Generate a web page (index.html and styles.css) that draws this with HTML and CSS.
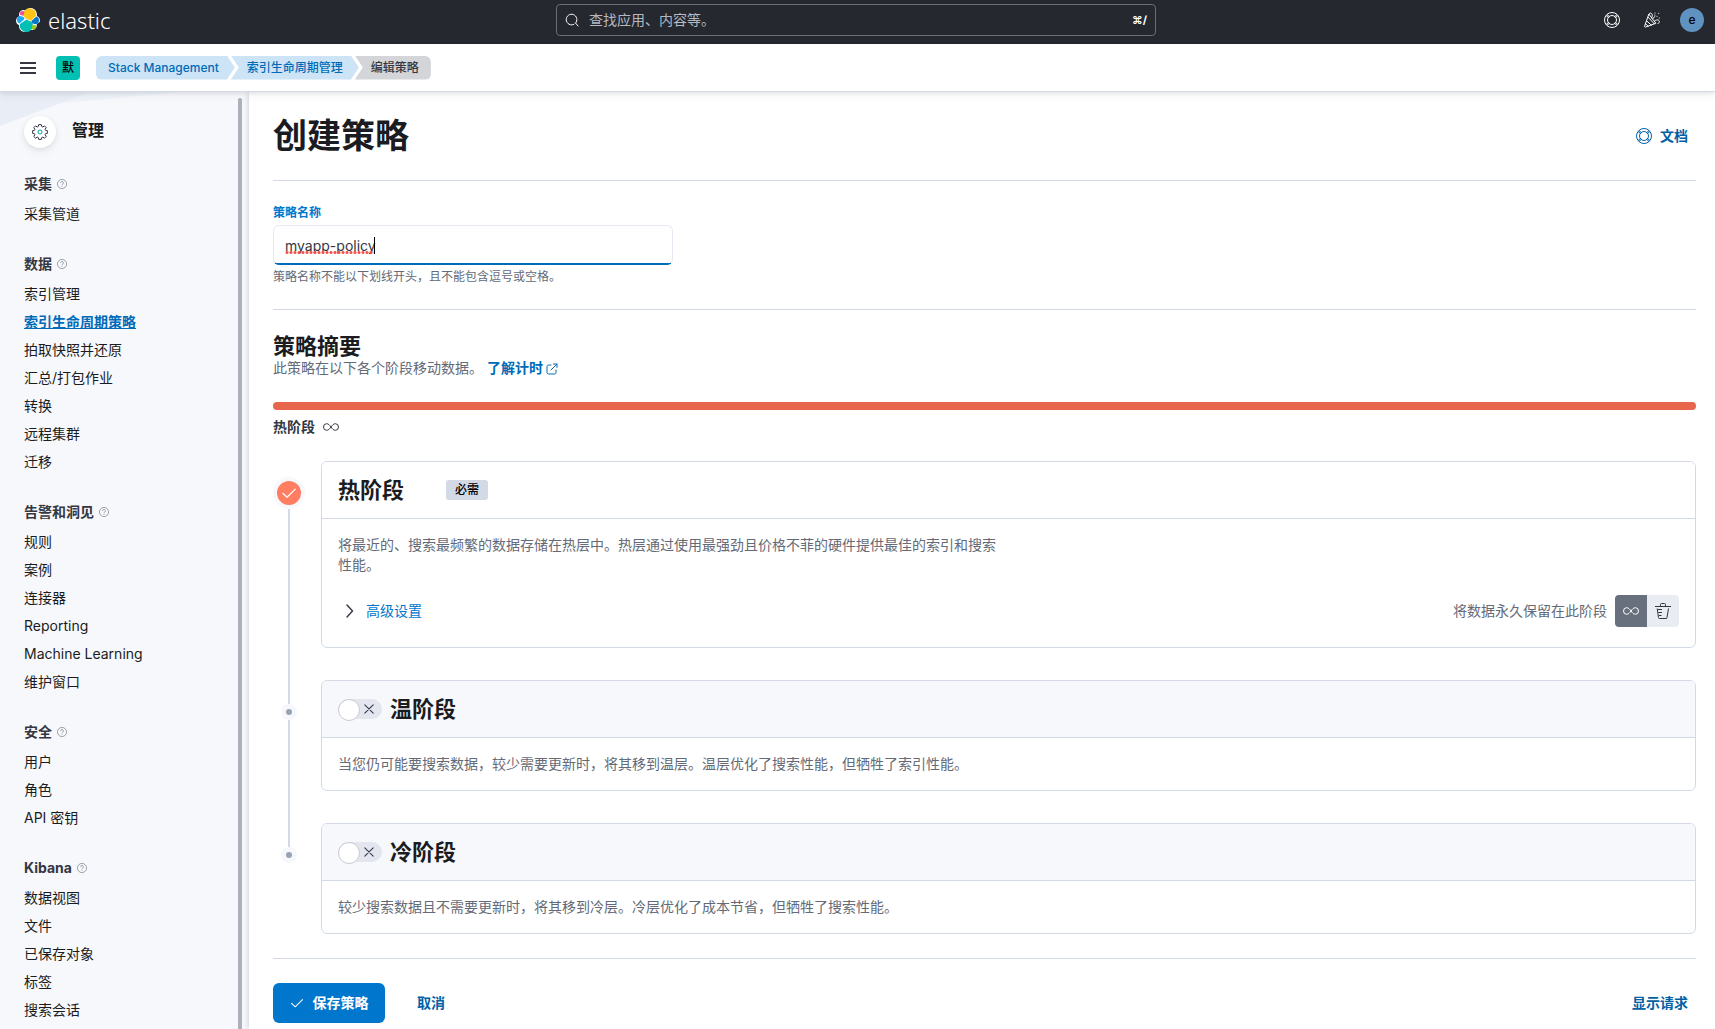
FILE: index.html
```html
<!DOCTYPE html>
<html lang="zh-CN">
<head>
<meta charset="utf-8">
<meta name="viewport" content="width=device-width, initial-scale=1">
<title>创建策略 - Elastic</title>
<link rel="stylesheet" href="styles.css">
</head>
<body>
<svg class="sprite" aria-hidden="true">
  <symbol id="i-help" viewBox="0 0 16 16">
    <g fill="none" stroke="currentColor"><circle cx="8" cy="8" r="7.5"/><circle cx="8" cy="8" r="4.5"/>
    <path d="M3 2.6l2.6 2.2M2.2 3.7l2.5 2M13 2.6l-2.6 2.2M13.8 3.7l-2.5 2M3 13.4l2.6-2.2M2.2 12.3l2.5-2M13 13.4l-2.6-2.2M13.8 12.3l-2.5-2"/></g>
  </symbol>
  <symbol id="i-question" viewBox="0 0 16 16">
    <g fill="none" stroke="currentColor"><circle cx="8" cy="8" r="7.3"/><path d="M5.8 6.2a2.2 2.2 0 1 1 3.3 1.9c-.8.4-1.1.8-1.1 1.7M8 11v1.3"/></g>
  </symbol>
  <symbol id="i-check" viewBox="0 0 16 16"><path fill="none" stroke="currentColor" stroke-width="1.2" stroke-linecap="round" stroke-linejoin="round" d="M1.8 8.3l4.2 4 8.3-8.2"/></symbol>
  <symbol id="i-cross" viewBox="0 0 16 16"><path fill="none" stroke="currentColor" stroke-width="1.2" stroke-linecap="round" d="M3.2 3.2l9.6 9.6M12.8 3.2l-9.6 9.6"/></symbol>
  <symbol id="i-infinity" viewBox="0 0 16 16"><path fill="none" stroke="currentColor" stroke-width="1" d="M8 8C6.500 6 5.300 4.700 3.700 4.700a3.200 3.300 0 0 0 0 6.600C5.300 11.300 6.500 10 8 8s2.700-3.300 4.300-3.300a3.200 3.300 0 0 1 0 6.600C10.700 11.300 9.500 10 8 8z"/></symbol>
</svg>

<header class="topbar">
  <a class="brand" href="#" aria-label="Elastic">
    <svg width="24" height="24" viewBox="0 0 32 32" aria-hidden="true">
      <path fill="#fff" d="M32 16.770c0-2.680-1.660-5.030-4.170-5.950C28.300 7.260 27.300 1 19.720.100 16.800-.050 14.300 1.200 12.600 3.400 9.600 1.300 5.200 3 4.200 7.300c-.3 1.100-.2 2.600.1 3.600C1.600 11.800 0 14.400 0 17c0 2.700 1.700 5.100 4.200 6-.9 5 3 9 7.500 9 3 0 5.700-1.600 7.500-3.500 3.500 2.500 9.300-.400 8.500-7.300 2.600-1 4.300-1.800 4.300-4.430z"/>
      <path fill="#FEC514" d="M12.580 13.790l7 3.190 7.060-6.180c.1-.500.150-1 .150-1.560A8.750 8.750 0 0 0 10.820 4.300l-1.180 6.090z"/>
      <path fill="#00BFB3" d="M5.330 21.220a8.780 8.780 0 0 0 16.010 6.520l1.160-6.070-1.560-2.980-7.030-3.200z"/>
      <path fill="#F04E98" d="M5.290 9.090l4.800 1.140 1.050-5.460A3.790 3.790 0 0 0 5.290 9.090z"/>
      <path fill="#1BA9F5" d="M4.870 10.240a5.610 5.610 0 0 0-.210 10.450L11.390 14.600l-1.230-2.640z"/>
      <path fill="#93C90E" d="M20.880 27.740a3.780 3.780 0 0 0 5.840-4.300l-4.800-1.120z"/>
      <path fill="#07C" d="M21.850 20.560l5.280 1.240a5.610 5.610 0 0 0 .21-10.450l-6.910 6.050z"/>
    </svg>
    <span class="brand-name">elastic</span>
  </a>
  <form class="search" role="search">
    <svg width="14" height="14" viewBox="0 0 14 14" aria-hidden="true"><path fill="none" stroke="currentColor" d="M10.300 10.300a5.300 5.300 0 1 0-1.200.900M10.300 9.800l3 3.500"/></svg>
    <input type="search" aria-label="查找应用、内容等。" placeholder="查找应用、内容等。">
    <kbd>⌘/</kbd>
  </form>
  <div class="top-actions">
    <button type="button" aria-label="帮助"><svg width="16" height="16"><use href="#i-help"/></svg></button>
    <button type="button" aria-label="新增功能">
      <svg width="16" height="16" viewBox="0 0 16 16" fill="none" stroke="currentColor" stroke-linecap="round" stroke-linejoin="round"><path d="M4.700 2.500L.6 14.100c-.200.700.300 1.200 1 1l9.900-3.700zM4.100 5.200l6.300 6.700M2.700 9l4.800 4.300M1.700 11.800l2.400 2.500M4.700 2.500C5 .500 8 .400 8.300 3.200c.1 1.300-.5 1.600-.6 2.800M11 8.500c1.200.100 1.500-.800 2.700-.600 2.100.3 2.400 3.200.3 3.600M8.600 6.700l2.400-2.200M11 1v.1M13 4.300v.1M14.700 1.300v.1M15.300 6v.1M10.800 3v.1"/></svg>
    </button>
    <button type="button" aria-label="用户菜单"><span class="user">e</span></button>
  </div>
</header>

<div class="navbar">
  <button class="menu" type="button" aria-label="切换主导航"><svg width="16" height="12" viewBox="0 0 16 12"><path fill="currentColor" d="M0 0h16v2H0zM0 5h16v2H0zM0 10h16v2H0z"/></svg></button>
  <button class="space" type="button" aria-label="默认工作区">默</button>
  <nav aria-label="面包屑">
    <ol class="crumbs">
      <li><a href="#">Stack Management</a></li>
      <li><a href="#">索引生命周期管理</a></li>
      <li aria-current="page">编辑策略</li>
    </ol>
  </nav>
</div>

<div class="layout">
  <aside class="sidebar">
    <svg class="backdrop" width="240" height="40" viewBox="0 0 240 40" aria-hidden="true"><path fill="#EEF2F9" d="M0 0h180L0 17z"/><path fill="#E9EEF6" d="M0 0h90L0 34z"/></svg>
    <nav class="side-nav" aria-label="管理">
      <div class="side-head">
        <span class="gear"><svg width="16" height="16" viewBox="0 0 16 16" fill="none"><path stroke="#343741" stroke-linejoin="round" d="M6.700.600h2.600l.4 1.900 1.100.500 1.700-1.100 1.700 1.700-1.100 1.700.5 1.100 1.800.300v2.600l-1.800.4-.5 1.100 1.100 1.700-1.700 1.700-1.700-1.100-1.100.500-.4 1.800H6.700l-.4-1.800-1.100-.5-1.700 1.100-1.700-1.700 1.100-1.700-.5-1.100L.600 9.300V6.700l1.800-.3.500-1.100-1.100-1.700 1.700-1.700L5.200 3l1.100-.5z"/><circle cx="8" cy="8" r="2" stroke="#00A599"/></svg></span>
        <h2>管理</h2>
      </div>
      <section>
        <h3>采集 <svg width="10" height="10"><use href="#i-question"/></svg></h3>
        <ul><li><a href="#">采集管道</a></li></ul>
      </section>
      <section>
        <h3>数据 <svg width="10" height="10"><use href="#i-question"/></svg></h3>
        <ul>
          <li><a href="#">索引管理</a></li>
          <li><a href="#" class="selected" aria-current="page">索引生命周期策略</a></li>
          <li><a href="#">拍取快照并还原</a></li>
          <li><a href="#">汇总/打包作业</a></li>
          <li><a href="#">转换</a></li>
          <li><a href="#">远程集群</a></li>
          <li><a href="#">迁移</a></li>
        </ul>
      </section>
      <section>
        <h3>告警和洞见 <svg width="10" height="10"><use href="#i-question"/></svg></h3>
        <ul>
          <li><a href="#">规则</a></li>
          <li><a href="#">案例</a></li>
          <li><a href="#">连接器</a></li>
          <li><a href="#">Reporting</a></li>
          <li><a href="#">Machine Learning</a></li>
          <li><a href="#">维护窗口</a></li>
        </ul>
      </section>
      <section>
        <h3>安全 <svg width="10" height="10"><use href="#i-question"/></svg></h3>
        <ul>
          <li><a href="#">用户</a></li>
          <li><a href="#">角色</a></li>
          <li><a href="#">API 密钥</a></li>
        </ul>
      </section>
      <section>
        <h3>Kibana <svg width="10" height="10"><use href="#i-question"/></svg></h3>
        <ul>
          <li><a href="#">数据视图</a></li>
          <li><a href="#">文件</a></li>
          <li><a href="#">已保存对象</a></li>
          <li><a href="#">标签</a></li>
          <li><a href="#">搜索会话</a></li>
        </ul>
      </section>
    </nav>
    <div class="scroll-thumb"></div>
  </aside>

  <main class="content">
    <div class="page-head">
      <h1>创建策略</h1>
      <a class="text-btn" href="#"><svg width="16" height="16" aria-hidden="true"><use href="#i-help"/></svg>文档</a>
    </div>

    <div class="name-field">
      <label for="policy-name">策略名称</label>
      <div class="input-wrap">
        <input id="policy-name" type="text" value="myapp-policy" spellcheck="false" aria-describedby="policy-help">
        <span class="marked" aria-hidden="true"></span>
      </div>
      <p id="policy-help">策略名称不能以下划线开头，且不能包含逗号或空格。</p>
    </div>

    <section class="summary">
      <h2>策略摘要</h2>
      <p>此策略在以下各个阶段移动数据。 <a href="#">了解计时 <svg width="12" height="12" viewBox="0 0 12 12" fill="none" stroke="currentColor" stroke-linecap="round" aria-hidden="true"><path d="M5 2H2.500A1.500 1.500 0 0 0 1 3.500v6A1.500 1.500 0 0 0 2.500 11h6A1.500 1.500 0 0 0 10 9.500V7M7.500 1H11v3.500M11 1L5 7"/></svg></a></p>
      <div class="bar"></div>
      <div class="bar-label">热阶段 <svg width="16" height="16" aria-hidden="true"><use href="#i-infinity"/></svg></div>
    </section>

    <div class="phases">
      <section class="phase">
        <div class="track"><span class="gap"></span><span class="done"><svg width="16" height="16" aria-hidden="true"><use href="#i-check"/></svg></span><span class="line"></span></div>
        <div class="card">
          <div class="card-head open"><h2>热阶段</h2><span class="badge">必需</span></div>
          <div class="card-body">
            <p>将最近的、搜索最频繁的数据存储在热层中。热层通过使用最强劲且价格不菲的硬件提供最佳的索引和搜索性能。</p>
            <div class="card-tools">
              <button class="advanced" type="button" aria-expanded="false"><svg width="16" height="16" viewBox="0 0 16 16" aria-hidden="true"><path fill="none" stroke="#343741" stroke-width="1.400" stroke-linecap="round" d="M5 2l5.500 6L5 14"/></svg>高级设置</button>
              <div class="retention">
                <span>将数据永久保留在此阶段</span>
                <div class="toggle">
                  <button class="on" type="button" aria-pressed="true" aria-label="永久保留"><svg width="16" height="16"><use href="#i-infinity"/></svg></button>
                  <button type="button" aria-pressed="false" aria-label="删除数据"><svg width="16" height="16" viewBox="0 0 16 16" fill="none" stroke="currentColor"><path d="M0 3.500h16M5.500 3.500v-2a1 1 0 0 1 1-1h3a1 1 0 0 1 1 1v2M2.200 5.500l1.300 9a1 1 0 0 0 1 1h6.500a1 1 0 0 0 1-1l1.500-9M2.500 6.500h4.500M3.300 9.500H7M3.600 12.500H6.500"/></svg></button>
                </div>
              </div>
            </div>
          </div>
        </div>
      </section>

      <section class="phase">
        <div class="track"><span class="line lead"></span><span class="dot"></span><span class="line"></span></div>
        <div class="card">
          <div class="card-head">
            <label class="switch"><input type="checkbox" role="switch" aria-label="启用温阶段"><svg width="14" height="14" aria-hidden="true"><use href="#i-cross"/></svg></label>
            <h2>温阶段</h2>
          </div>
          <div class="card-body"><p class="wide">当您仍可能要搜索数据，较少需要更新时，将其移到温层。温层优化了搜索性能，但牺牲了索引性能。</p></div>
        </div>
      </section>

      <section class="phase">
        <div class="track"><span class="line lead"></span><span class="dot"></span></div>
        <div class="card">
          <div class="card-head">
            <label class="switch"><input type="checkbox" role="switch" aria-label="启用冷阶段"><svg width="14" height="14" aria-hidden="true"><use href="#i-cross"/></svg></label>
            <h2>冷阶段</h2>
          </div>
          <div class="card-body"><p class="wide">较少搜索数据且不需要更新时，将其移到冷层。冷层优化了成本节省，但牺牲了搜索性能。</p></div>
        </div>
      </section>
    </div>

    <div class="actions">
      <button class="save" type="button"><svg width="14" height="14" aria-hidden="true"><use href="#i-check"/></svg>保存策略</button>
      <button class="text-btn" type="button">取消</button>
      <button class="text-btn request" type="button">显示请求</button>
    </div>
  </main>
</div>
</body>
</html>
```
FILE: styles.css
```css
:root {
  --ink: #343741;
  --title: #1a1c21;
  --subdued: #646a77;
  --link: #0061a6;
  --primary: #0077cc;
  --line: #d3dae6;
  --shade: #f7f8fc;
}

* { box-sizing: border-box; }

body {
  margin: 0;
  min-height: 100vh;
  display: flex;
  flex-direction: column;
  background: #fff;
  color: var(--ink);
  font: 400 14px/20px Inter, "Noto Sans CJK SC", sans-serif;
}

h1, h2, h3, p, ul, ol { margin: 0; padding: 0; }
ul, ol { list-style: none; }
a { color: inherit; text-decoration: none; }
svg { flex: none; }
.sprite { display: none; }

button {
  display: flex;
  align-items: center;
  justify-content: center;
  padding: 0;
  border: 0;
  background: none;
  color: inherit;
  font: inherit;
  cursor: pointer;
}

/* Top bar */
.topbar {
  display: grid;
  grid-template-columns: 1fr minmax(200px, 600px) 1fr;
  align-items: center;
  height: 44px;
  padding: 0 3px 4px 16px;
  background: #25282f;
  color: #fff;
}

.brand { display: flex; align-items: center; gap: 8px; }
.brand-name { font: 300 22px/24px "Noto Sans", "Open Sans", sans-serif; }

.search {
  display: flex;
  align-items: center;
  gap: 10px;
  height: 32px;
  margin-left: -8px;
  margin-right: 8px;
  padding: 0 8px;
  border: 1px solid #6a6d73;
  border-radius: 4px;
}

.search input {
  flex: 1;
  min-width: 0;
  padding: 0;
  border: 0;
  outline: 0;
  background: none;
  color: #fff;
  font: inherit;
}

.search input::placeholder { color: #b4b8c1; opacity: 1; }
.search kbd { font: 700 11px/16px Inter, "Noto Sans CJK SC", "DejaVu Sans", sans-serif; }

.top-actions { display: flex; justify-content: flex-end; }
.top-actions button { width: 40px; height: 40px; }

.user {
  width: 24px;
  border-radius: 50%;
  background: #6092c0;
  color: #000;
  font-size: 12px;
  font-weight: 500;
  line-height: 24px;
}

/* Second bar */
.navbar {
  position: relative;
  z-index: 2;
  display: flex;
  align-items: center;
  height: 48px;
  padding: 0 16px 0 20px;
  border-bottom: 1px solid var(--line);
  background: #fff;
  box-shadow: 0 1px 4px rgba(0, 0, 0, .08), 0 4px 8px rgba(0, 0, 0, .05);
}

.menu { margin-right: 20px; height: 24px; color: var(--ink); }

.space {
  width: 24px;
  height: 24px;
  margin-right: 16px;
  border-radius: 4px;
  background: #00bfb3;
  color: #000;
  font-size: 12px;
  font-weight: 500;
}

.crumbs { display: flex; font-size: 12px; font-weight: 500; line-height: 24px; }

.crumbs li {
  padding: 0 16px;
  background: #cce4f5;
  color: #006bb8;
  clip-path: polygon(0 0, calc(100% - 8px) 0, 100% 50%, calc(100% - 8px) 100%, 0 100%, 8px 50%);
}

.crumbs li + li { margin-left: -4px; }

.crumbs li:first-child {
  padding-left: 12px;
  border-radius: 6px 0 0 6px;
  clip-path: polygon(0 0, calc(100% - 8px) 0, 100% 50%, calc(100% - 8px) 100%, 0 100%);
}

.crumbs li:last-child {
  padding-right: 12px;
  border-radius: 0 6px 6px 0;
  background: #d4d5d8;
  color: var(--ink);
  clip-path: polygon(0 0, 100% 0, 100% 100%, 0 100%, 8px 50%);
}

/* Body */
.layout { flex: 1; display: flex; }

.sidebar {
  position: relative;
  display: flex;
  flex: none;
  width: 249px;
  background: var(--shade);
}

.backdrop { position: absolute; top: 0; left: 0; }
.side-nav { position: relative; flex: 1; padding: 24px 12px 4px 24px; }

.side-head { display: flex; align-items: center; gap: 16px; margin-bottom: 26px; }
.side-head h2 { font-size: 16px; font-weight: 700; line-height: 28px; align-self: flex-start; color: var(--title); }

.gear {
  display: flex;
  align-items: center;
  justify-content: center;
  width: 32px;
  height: 32px;
  border-radius: 50%;
  background: #fff;
  box-shadow: 0 1px 4px rgba(0, 0, 0, .08), 0 4px 10px rgba(0, 0, 0, .06);
}

.side-nav section + section { margin-top: 26px; }
.side-nav h3 { display: flex; align-items: center; gap: 5px; margin-bottom: 6px; font-size: 14px; font-weight: 700; line-height: 20px; }
.side-nav h3 svg { color: #69707d; }
.side-nav li { line-height: 28px; color: var(--title); }
.side-nav .selected { color: #006bb8; font-weight: 600; text-decoration: underline; }

.scroll-thumb { width: 4px; margin: 6px 7px 0 0; border-radius: 2px 2px 0 0; background: #abb0ba; }

.content {
  position: relative;
  flex: 1;
  min-width: 0;
  padding: 24px 19px 4px 24px;
  background: #fff;
  box-shadow: 0 0 6px rgba(0, 0, 0, .2);
}

.page-head {
  display: flex;
  align-items: center;
  justify-content: space-between;
  padding-bottom: 24px;
  border-bottom: 1px solid var(--line);
}

h1 { color: var(--title); font-size: 34px; font-weight: 700; line-height: 40px; }
h2 { color: var(--title); font-size: 22px; font-weight: 700; line-height: 24px; }

.text-btn { display: flex; align-items: center; gap: 8px; padding: 0 8px; color: var(--link); font-weight: 600; }

.name-field {
  padding: 24px 0;
  border-bottom: 1px solid var(--line);
  font-size: 12px;
  line-height: 16px;
}

.name-field label { display: block; margin-bottom: 4px; color: var(--primary); font-weight: 700; }
.name-field p { margin-top: 4px; color: var(--subdued); }

.input-wrap { position: relative; width: 400px; max-width: 100%; }

.input-wrap input {
  display: block;
  width: 100%;
  height: 40px;
  padding: 0 11px;
  border: 1px solid #e6e9f1;
  border-radius: 6px;
  outline: 0;
  background: linear-gradient(#006bb8, #006bb8) bottom / 100% 2px no-repeat border-box, #fff;
  border-bottom-color: #006bb8;
  color: var(--ink);
  font: inherit;
  font-size: 14px;
}

/* Spelling mark and text caret */
.marked {
  position: absolute;
  top: 12px;
  left: 12px;
  width: 90px;
  height: 17px;
  border-right: 1px solid #000;
  background: radial-gradient(circle, #f0544a 1px, transparent 2px) bottom left / 4px 3px repeat-x;
}

.summary { padding: 24px 0; }
.summary p { color: var(--subdued); }
.summary a { color: #006bb8; font-weight: 600; }
.summary a svg { vertical-align: -2px; }
.bar { height: 8px; margin: 24px 0 7px; border-radius: 4px; background: #e7664c; }
.bar-label { display: flex; align-items: center; gap: 8px; font-weight: 600; }

/* Phases */
.phase { display: flex; }
.card { flex: 1; min-width: 0; margin-bottom: 32px; border: 1px solid var(--line); border-radius: 6px; }
.phase:last-child .card { margin-bottom: 0; }

.track { display: flex; flex-direction: column; align-items: center; width: 32px; margin-right: 16px; }
.gap { height: 16px; }
.line { flex: 1; width: 2px; background: var(--line); }
.lead { flex: none; height: 24px; }

.done {
  display: flex;
  align-items: center;
  justify-content: center;
  width: 32px;
  height: 32px;
  border: 4px solid var(--shade);
  border-radius: 50%;
  background: #ff7e62;
  color: #fff;
}

.dot { width: 16px; height: 16px; border: 5px solid var(--shade); border-radius: 50%; background: #98a2b3; }

.card-head {
  display: flex;
  align-items: center;
  gap: 8px;
  padding: 16px;
  border-bottom: 1px solid var(--line);
  border-radius: 5px 5px 0 0;
  background: var(--shade);
}

.card-head.open { gap: 42px; background: #fff; }

.badge {
  padding: 0 9px;
  border-radius: 3px;
  background: var(--line);
  color: #000;
  font-size: 12px;
  font-weight: 500;
  line-height: 20px;
}

.card-body { padding: 16px; color: var(--subdued); }
.card-body p { max-width: 660px; }
.card-body .wide { max-width: none; }
.card-tools { display: flex; align-items: center; justify-content: space-between; padding: 20px 0 4px; }
.advanced { gap: 8px; padding-left: 4px; color: var(--primary); }
.retention { display: flex; align-items: center; gap: 8px; }
.toggle { display: flex; overflow: hidden; border-radius: 4px; }
.toggle button { width: 32px; height: 32px; background: #e9edf3; color: var(--ink); }
.toggle .on { background: #69707d; color: #fff; }

.switch { position: relative; width: 44px; height: 20px; color: var(--ink); }

.switch input {
  display: block;
  width: 44px;
  height: 20px;
  margin: 0;
  border-radius: 10px;
  appearance: none;
  background: #e3e6ee;
}

.switch input::before {
  content: "";
  display: block;
  width: 20px;
  height: 20px;
  border: 1px solid #c8cbd2;
  border-radius: 50%;
  background: #fff;
}

.switch svg { position: absolute; top: 3px; right: 6px; }

.actions {
  display: flex;
  align-items: center;
  gap: 24px;
  margin-top: 24px;
  padding-top: 24px;
  border-top: 1px solid var(--line);
}

.save {
  gap: 9px;
  width: 112px;
  height: 40px;
  border-radius: 6px;
  background: var(--primary);
  color: #fff;
  font-weight: 700;
}

.request { margin-left: auto; }
```
